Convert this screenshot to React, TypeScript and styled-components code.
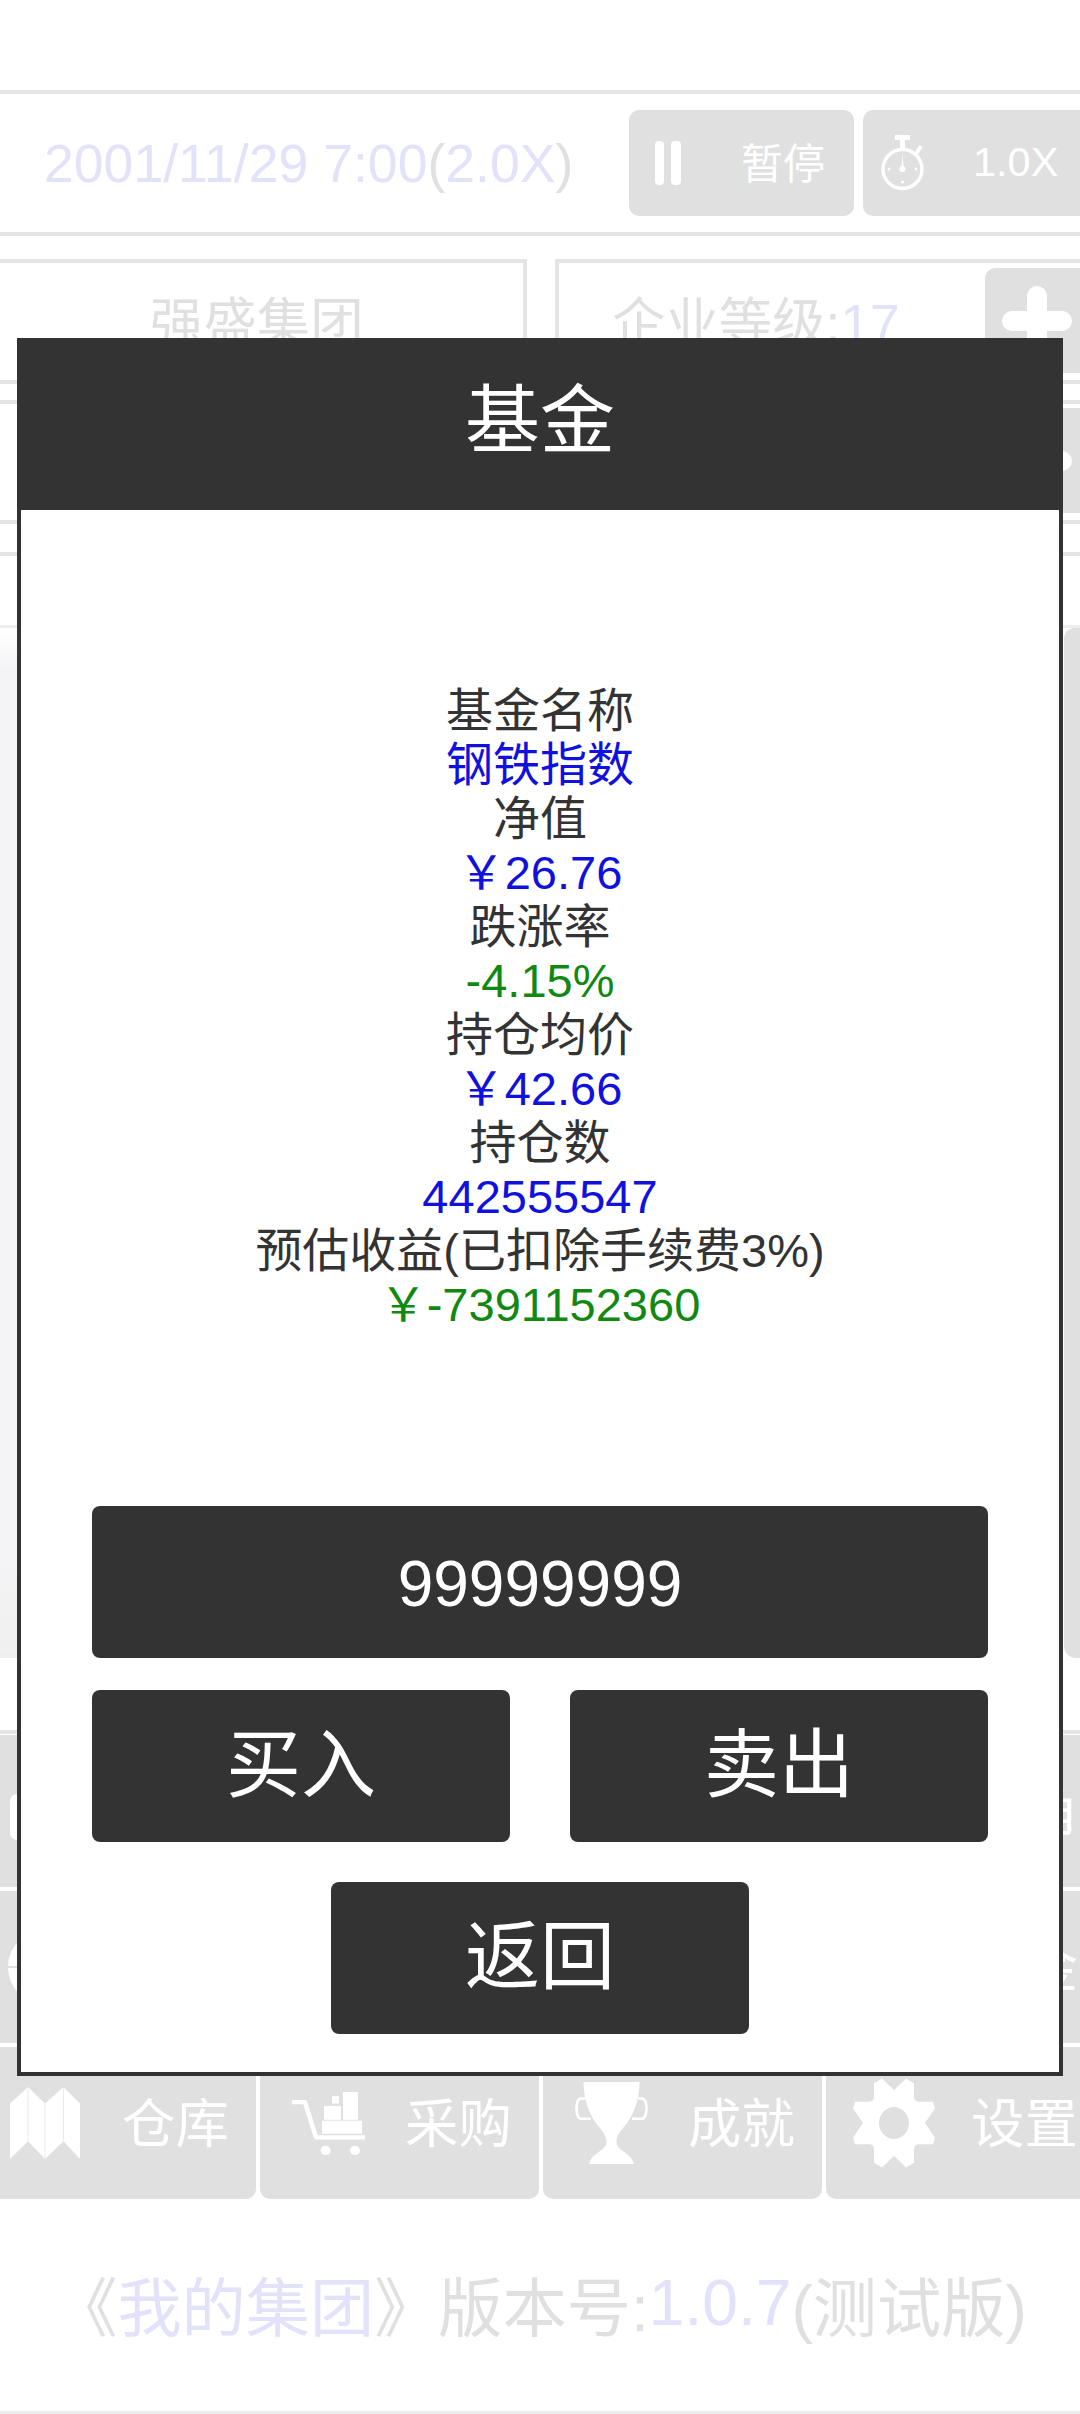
import React from "react";
import styled, { createGlobalStyle } from "styled-components";

const FONT = `"Liberation Sans", "Noto Sans CJK SC", sans-serif`;
const LINE = "#e4e4e4";
const GHOST = "#e0e0e0";
const GHOST_BLUE = "#e2e2fa";
const DARK = "#333333";

const GlobalStyle = createGlobalStyle`
  html, body {
    margin: 0;
    padding: 0;
    background: #fff;
    overflow: hidden;
  }
`;

const Screen = styled.div`
  position: relative;
  width: 1080px;
  height: 2414px;
  overflow: hidden;
  background: #fff;
  font-family: ${FONT};
  color: ${GHOST};
`;

const Tint = styled.span`
  color: ${GHOST_BLUE};
`;

const TimeBar = styled.div`
  margin-top: 90px;
  height: 138px;
  display: flex;
  align-items: center;
  border-top: 4px solid ${LINE};
  border-bottom: 4px solid ${LINE};
`;

const DateText = styled.div`
  flex: none;
  width: 629px;
  padding-left: 44px;
  box-sizing: border-box;
  font-size: 53.6px;
  white-space: nowrap;
`;

const TimeButton = styled.div<{ $width: number }>`
  flex: none;
  width: ${(p) => p.$width}px;
  height: 106px;
  margin-right: 9px;
  display: flex;
  align-items: center;
  border-radius: 10px;
  background: ${GHOST};
  color: #fff;
`;

const PauseIcon = styled.svg`
  flex: none;
  width: 26px;
  height: 44px;
  margin-left: 26px;
`;

const WatchIcon = styled.svg`
  flex: none;
  width: 43px;
  height: 56px;
  margin-left: 18px;
`;

const TimeLabel = styled.span<{ $gap: number; $size: number; $lift: number }>`
  margin-left: ${(p) => p.$gap}px;
  padding-bottom: ${(p) => p.$lift}px;
  font-size: ${(p) => p.$size}px;
`;

const InfoRow = styled.div<{ $height: number; $pad: number }>`
  height: ${(p) => p.$height}px;
  padding-top: ${(p) => p.$pad}px;
  box-sizing: border-box;
  display: flex;
  border-bottom: 4px solid ${LINE};
`;

const InfoCard = styled.div<{ $width: number; $shift: number; $gapLeft: number }>`
  flex: none;
  width: ${(p) => p.$width}px;
  height: 125px;
  box-sizing: border-box;
  margin-left: ${(p) => p.$gapLeft}px;
  padding-left: ${(p) => p.$shift}px;
  display: flex;
  align-items: center;
  border: 4px solid ${LINE};
  font-size: 53.4px;
  white-space: nowrap;
`;

const CardText = styled.span`
  padding-bottom: 6px;
`;

const PlusButton = styled.div<{ $left: string }>`
  flex: none;
  align-self: flex-start;
  width: 126px;
  height: 105px;
  margin-left: ${(p) => p.$left};
  padding: 18px 0 0 17px;
  box-sizing: border-box;
  border-radius: 10px 0 0 10px;
  background: ${GHOST};
`;

const CardPlusButton = styled(PlusButton)`
  margin-top: 5px;
`;

const PlusIcon = styled.svg`
  display: block;
  width: 70px;
  height: 70px;
`;

const Band = styled.div`
  height: 32px;
  box-sizing: border-box;
  border-bottom: 4px solid ${LINE};
`;

const Panels = styled.div`
  margin-top: 69px;
  height: 1033px;
  box-sizing: border-box;
  display: flex;
  justify-content: space-between;
  border-top: 3px solid #eeeeee;
`;

const LeftPanel = styled.div`
  width: 500px;
  border-bottom: 3px solid #eeeeee;
  background: linear-gradient(#ffffff, #f4f4f6 4%, #f4f4f6 90%, #f0f0f0);
`;

const RightPanel = styled.div`
  width: 16px;
  border-radius: 10px 0 0 12px;
  background: ${GHOST};
`;

const NavGrid = styled.div`
  position: relative;
  width: 1128px;
  margin: 76px 0 0 -23px;
  padding-top: 1px;
  display: grid;
  grid-template-columns: repeat(4, 279px);
  grid-auto-rows: 152px;
  gap: 4px;

  &::before {
    content: "";
    position: absolute;
    left: 0;
    right: 0;
    top: -4px;
    height: 4px;
    background: ${LINE};
  }
`;

const NavCell = styled.div`
  display: flex;
  align-items: center;
  border-radius: 0 0 10px 10px;
  background: ${GHOST};
  color: #fff;
`;

const NavIconSlot = styled.div`
  flex: none;
  width: 136px;
  display: flex;
  justify-content: center;
  align-items: center;
`;

const NavLabel = styled.span`
  margin-left: 9px;
  padding-bottom: 8px;
  font-size: 53.4px;
  white-space: nowrap;
`;

const Footer = styled.div`
  height: 215px;
  box-sizing: border-box;
  padding-bottom: 5px;
  display: flex;
  justify-content: center;
  align-items: center;
  border-bottom: 3px solid #eeeeee;
  font-size: 64.2px;
  white-space: nowrap;
`;

const Modal = styled.div`
  position: absolute;
  left: 17px;
  top: 338px;
  width: 1046px;
  height: 1737.5px;
  box-sizing: border-box;
  display: flex;
  flex-direction: column;
  border: 4.5px solid ${DARK};
  background: #fff;
`;

const ModalHeader = styled.div`
  flex: none;
  height: 168px;
  box-sizing: border-box;
  padding-bottom: 24px;
  display: flex;
  justify-content: center;
  align-items: center;
  background: ${DARK};
  color: #fff;
  font-size: 75px;
`;

const ModalBody = styled.div`
  flex: 1;
  padding: 173.5px 71px 0;
  display: flex;
  flex-direction: column;
`;

const FundInfo = styled.div`
  margin-bottom: 174px;
  text-align: center;
  font-size: 47px;
  line-height: 54px;
`;

const InfoLine = styled.div<{ $color: string }>`
  color: ${(p) => p.$color};
  white-space: nowrap;
`;

const ActionButton = styled.div`
  height: 152px;
  box-sizing: border-box;
  padding-bottom: 14px;
  display: flex;
  justify-content: center;
  align-items: center;
  border-radius: 8px;
  background: ${DARK};
  color: #fff;
  font-size: 75px;
`;

const AmountField = styled(ActionButton)`
  padding: 4px 0 0;
  font-size: 64px;
`;

const ButtonRow = styled.div`
  margin-top: 32px;
  display: grid;
  grid-template-columns: 418px 418px;
  justify-content: space-between;
`;

const BackRow = styled.div`
  margin-top: 40px;
  display: flex;
  justify-content: center;
`;

const BackButton = styled(ActionButton)`
  width: 418px;
`;

const TEXT = "#333333";
const BLUE = "#1111dd";
const GREEN = "#118811";

const fundLines = [
  { text: "基金名称", color: TEXT },
  { text: "钢铁指数", color: BLUE },
  { text: "净值", color: TEXT },
  { text: "￥26.76", color: BLUE },
  { text: "跌涨率", color: TEXT },
  { text: "-4.15%", color: GREEN },
  { text: "持仓均价", color: TEXT },
  { text: "￥42.66", color: BLUE },
  { text: "持仓数", color: TEXT },
  { text: "442555547", color: BLUE },
  { text: "预估收益(已扣除手续费3%)", color: TEXT },
  { text: "￥-7391152360", color: GREEN },
];

const MapIcon = () => (
  <svg width="70" height="72" viewBox="0 0 70 77" preserveAspectRatio="none">
    <path d="M0 17.6L18 0L35 17.6L53.5 0L70 17.6V77L53.5 58L35 77L18 58L0 77Z" fill="#fff" />
    <path d="M18 0V58M35 17.6V77M53.5 0V58" stroke={GHOST} strokeWidth="0.7" />
  </svg>
);

const CartIcon = () => (
  <svg width="73" height="65" viewBox="0 0 73 70" fill="#fff" preserveAspectRatio="none">
    <path d="M0 12H13L24 50H73" fill="none" stroke="#fff" strokeWidth="4.5" strokeLinejoin="round" />
    <circle cx="33.6" cy="64" r="5" />
    <circle cx="63" cy="64" r="5" />
    <rect x="30" y="32" width="40" height="14" />
    <rect x="32" y="16" width="17" height="15" />
    <rect x="40" y="5.5" width="7" height="8" />
    <rect x="51" y="1" width="15" height="30" />
  </svg>
);

const TrophyIcon = () => (
  <svg width="73" height="82" viewBox="0 0 73 85" preserveAspectRatio="none">
    <path
      d="M8.5 0H64.5C64.5 15 60.5 30 52.5 42C47.5 49 41.5 54 41.5 62C41.5 72 55.5 72 59 85H14C17.5 72 31.5 72 31.5 62C31.5 54 25.5 49 20.5 42C12.5 30 8.5 15 8.5 0Z"
      fill="#fff"
    />
    <path
      d="M10 17H6C0 17 0 38 6 38H16M63 17H67C73 17 73 38 67 38H57"
      fill="none"
      stroke="#fff"
      strokeWidth="2.6"
    />
  </svg>
);

const GearIcon = () => (
  <svg width="82" height="90" viewBox="-41 -46.5 82 93" preserveAspectRatio="none">
    <path
      fillRule="evenodd"
      fill="#fff"
      d="M0 -34L12 -46L20 -41V-27Q20 -22 25 -22H39L41 -15L31 0L41 15L39 22H25Q20 22 20 27V41L12 46L0 34L-12 46L-20 41V27Q-20 22 -25 22H-39L-41 15L-31 0L-41 -15L-39 -22H-25Q-20 -22 -20 -27V-41L-12 -46ZM15 0A15 16.5 0 1 0 -15 0A15 16.5 0 1 0 15 0Z"
    />
  </svg>
);

const StaffIcon = () => (
  <svg width="70" height="58" viewBox="0 0 70 58">
    <rect y="12" width="70" height="46" rx="7" fill="#fff" />
  </svg>
);

const GlobeIcon = () => (
  <svg width="74" height="74" viewBox="0 0 74 74">
    <circle cx="37" cy="37" r="37" fill="#fff" />
    <path d="M0 37H74" stroke={GHOST} strokeWidth="2" />
  </svg>
);

// rows one and two sit behind the dialog, only their outer edges show
const navItems: { id: string; label?: string; icon?: React.ReactNode }[] = [
  { id: "staff", icon: <StaffIcon /> },
  { id: "a" },
  { id: "b" },
  { id: "hero", label: "主角" },
  { id: "world", icon: <GlobeIcon /> },
  { id: "c" },
  { id: "d" },
  { id: "fund", label: "基金" },
  { id: "store", label: "仓库", icon: <MapIcon /> },
  { id: "buy", label: "采购", icon: <CartIcon /> },
  { id: "trophy", label: "成就", icon: <TrophyIcon /> },
  { id: "settings", label: "设置", icon: <GearIcon /> },
];

const Plus = () => (
  <PlusIcon viewBox="0 0 70 70">
    <path d="M35 10V60M10 35H60" stroke="#fff" strokeWidth="20" strokeLinecap="round" />
  </PlusIcon>
);

const App: React.FC = () => {
  return (
    <Screen>
      <GlobalStyle />

      <TimeBar>
        <DateText>
          <Tint>2001/11/29 7:00</Tint>(<Tint>2.0X</Tint>)
        </DateText>
        <TimeButton $width={225}>
          <PauseIcon viewBox="0 0 26 44">
            <rect x="0" width="9" height="44" rx="4" fill="#fff" />
            <rect x="16" width="10" height="44" rx="4" fill="#fff" />
          </PauseIcon>
          <TimeLabel $gap={60} $size={42} $lift={6}>暂停</TimeLabel>
        </TimeButton>
        <TimeButton $width={260}>
          <WatchIcon viewBox="0 0 43 56">
            <circle cx="21.5" cy="34" r="19.5" fill="none" stroke="#fff" strokeWidth="3.5" />
            <rect x="14" y="0" width="15" height="5" fill="#fff" />
            <rect x="19" y="4" width="5" height="9" fill="#fff" />
            <path d="M35 19L40 11" stroke="#fff" strokeWidth="4" />
            <path d="M20.5 33L21.5 18L22.5 33Z" fill="#fff" />
            <circle cx="21.5" cy="34" r="3" fill="#fff" />
            <circle cx="8" cy="34" r="1.5" fill="#fff" />
            <circle cx="35" cy="34" r="1.5" fill="#fff" />
            <circle cx="21.5" cy="47" r="1.5" fill="#fff" />
          </WatchIcon>
          <TimeLabel $gap={49} $size={41.5} $lift={2}>1.0X</TimeLabel>
        </TimeButton>
      </TimeBar>

      <InfoRow $height={168} $pad={23}>
        <InfoCard $width={545} $gapLeft={-18} $shift={164}>
          <CardText>强盛集团</CardText>
        </InfoCard>
        <InfoCard $width={560} $gapLeft={28} $shift={53}>
          <CardText>
            企业等级:<Tint>17</Tint>
          </CardText>
          <CardPlusButton $left="auto">
            <Plus />
          </CardPlusButton>
        </InfoCard>
      </InfoRow>

      <InfoRow $height={120} $pad={4}>
        <PlusButton $left="985px">
          <Plus />
        </PlusButton>
      </InfoRow>

      <Band />

      <Panels>
        <LeftPanel />
        <RightPanel />
      </Panels>

      <NavGrid>
        {navItems.map((item) => (
          <NavCell key={item.id}>
            <NavIconSlot>{item.icon}</NavIconSlot>
            {item.label && <NavLabel>{item.label}</NavLabel>}
          </NavCell>
        ))}
      </NavGrid>

      <Footer>
        《<Tint>我的集团</Tint>》版本号:<Tint>1.0.7</Tint>(测试版)
      </Footer>

      <Modal>
        <ModalHeader>基金</ModalHeader>
        <ModalBody>
          <FundInfo>
            {fundLines.map((line) => (
              <InfoLine key={line.text} $color={line.color}>
                {line.text}
              </InfoLine>
            ))}
          </FundInfo>
          <AmountField>99999999</AmountField>
          <ButtonRow>
            <ActionButton>买入</ActionButton>
            <ActionButton>卖出</ActionButton>
          </ButtonRow>
          <BackRow>
            <BackButton>返回</BackButton>
          </BackRow>
        </ModalBody>
      </Modal>
    </Screen>
  );
};

export default App;
